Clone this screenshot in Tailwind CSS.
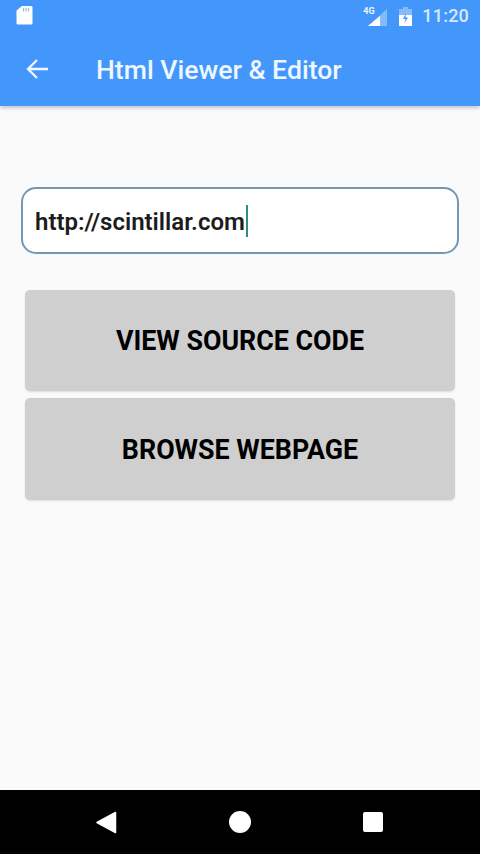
<!DOCTYPE html>
<html lang="en">
<head>
    <meta charset="UTF-8">
    <meta name="viewport" content="width=device-width, initial-scale=1.0">
    <title>Html Viewer &amp; Editor</title>
    <script src="https://cdn.jsdelivr.net/npm/@tailwindcss/browser@4"></script>
</head>
<body class="w-[480px] h-[854px] overflow-hidden flex flex-col bg-[#fafafa] font-['Roboto',sans-serif]">
    <!-- Status bar + toolbar -->
    <header class="h-[106px] bg-[#4497fa] shadow-[0_2px_4px_rgba(0,0,0,0.22)] flex flex-col shrink-0">
        <div class="h-[32px] flex items-center pl-[16px] pr-[11px]">
            <svg class="w-[17px] h-[20px] mb-[2px]" viewBox="0 0 17 20">
                <path d="M6 1h9a1.500 1.500 0 0 1 1.500 1.500v15.500a1.500 1.500 0 0 1-1.500 1.500h-13a1.500 1.500 0 0 1-1.500-1.500v-12.500z" fill="#fff"/>
                <path d="M7.500 3v3.500M10 3v3.500M12.500 3v3.500" stroke="#8fbdf5" stroke-width="1.200"/>
            </svg>
            <div class="ml-auto flex items-center">
                <div class="relative w-[24px] h-[22px] mr-[12px]">
                    <span class="absolute left-0 top-0 text-[9px] leading-[12px] font-bold text-white/90">4G</span>
                    <svg class="absolute right-0 bottom-0 w-[20px] h-[18px]" viewBox="0 0 20 18">
                        <path d="M20 0v17h-19z" fill="#fff" fill-opacity="0.35"/>
                        <path d="M13 7v10h-12z" fill="#fff"/>
                    </svg>
                </div>
                <svg class="w-[13px] h-[19px] mr-[10px]" viewBox="0 0 13 19">
                    <path d="M4 0h5v2h4v17h-13v-17h4z" fill="#fff" fill-opacity="0.35"/>
                    <path d="M0 8h13v11h-13z" fill="#fff"/>
                    <path d="M7 6l-3 6h2.500l-1 4 3.500-5.500h-2.500z" fill="#4497fa"/>
                </svg>
                <span class="text-[18px] leading-none font-medium text-[#d6eafd] tracking-[0.2px]">11:20</span>
            </div>
        </div>
        <div class="flex-1 flex items-center pl-[25px] pt-[2px]">
            <svg class="w-[24px] h-[24px] mb-[3px]" viewBox="0 0 24 24" fill="none" stroke="#f2f8ff" stroke-width="2.300">
                <path d="M23 12H3M12 3l-9 9 9 9"/>
            </svg>
            <h1 class="ml-[47px] text-[26.6px] leading-none font-medium text-[#eef6ff]">Html Viewer &amp; Editor</h1>
        </div>
    </header>

    <main class="flex-1 flex flex-col pt-[81px]">
        <div class="mx-[21px] h-[67px] bg-white border-2 border-[#7797b0] rounded-[15px] flex items-center pl-[12px]">
            <span class="text-[24px] leading-none font-semibold text-[#1c1c1c] pt-[2px]">http://scintillar.com</span>
            <span class="w-[2px] h-[32px] bg-[#2f8f7f] ml-[1px] mt-[1px]"></span>
        </div>

        <div class="mt-[36px] mx-[25px] flex flex-col gap-[7px]">
            <button class="h-[101px] pt-[2px] rounded-[5px] bg-[#cfcfcf] shadow-[0_1px_2px_rgba(0,0,0,0.12)] text-[26.800px] font-bold text-black">VIEW SOURCE CODE</button>
            <button class="h-[102px] pt-[2px] rounded-[5px] bg-[#cfcfcf] shadow-[0_1px_2px_rgba(0,0,0,0.12)] text-[26.800px] font-bold text-black">BROWSE WEBPAGE</button>
        </div>
    </main>

    <!-- Android nav bar -->
    <nav class="h-[64px] bg-black shrink-0 relative flex items-center justify-center">
        <svg class="absolute left-[96px] top-[21px] w-[21px] h-[23px]" viewBox="0 0 21 23">
            <path d="M19.500 1.500v20L1 11.500z" fill="#fff" stroke="#fff" stroke-width="1.500" stroke-linejoin="round"/>
        </svg>
        <div class="absolute left-[229px] top-[21px] w-[22px] h-[22px] rounded-full bg-white"></div>
        <div class="absolute left-[363px] top-[22px] w-[20px] h-[20px] rounded-[2px] bg-white"></div>
    </nav>
</body>
</html>
